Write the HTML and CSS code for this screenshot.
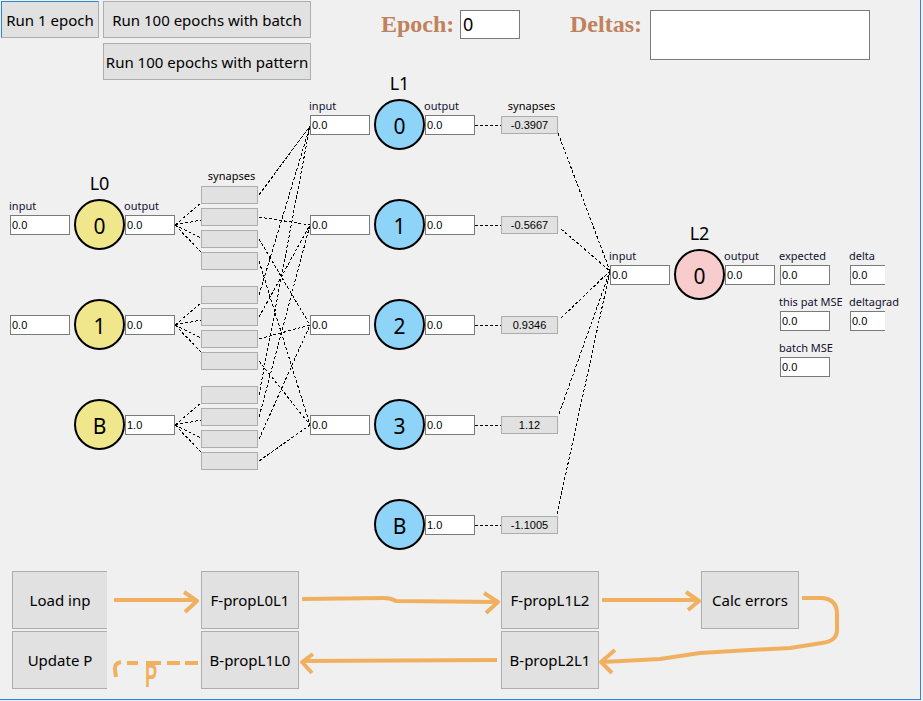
FILE: index.html
```html
<!DOCTYPE html>
<html>
<head>
<meta charset="utf-8">
<title>Neural network trainer</title>
<link rel="stylesheet" href="styles.css">
</head>
<body>
<div class="window">
  <div class="toolbar">
    <button class="btn run1">Run 1 epoch</button>
    <div class="btn-stack">
      <button class="btn wide">Run 100 epochs with batch</button>
      <button class="btn wide">Run 100 epochs with pattern</button>
    </div>
    <div class="stat epoch">
      <span class="stat-label">Epoch:</span>
      <div class="tb epoch-box">0</div>
    </div>
    <div class="stat deltas">
      <span class="stat-label">Deltas:</span>
      <div class="tb deltas-box"></div>
    </div>
  </div>

  <svg class="wires" width="921" height="700" viewBox="0 0 921 700">
    <g class="d">
      <path d="M175 225 L201 203 M175 225 L201 220 M175 225 L201 238 M175 225 L201 252"/>
      <path d="M175 325 L201 303 M175 325 L201 320 M175 325 L201 338 M175 325 L201 352"/>
      <path d="M175 425 L201 403 M175 425 L201 420 M175 425 L201 438 M175 425 L201 452"/>
      <path d="M259 195 L310 126 M259 217 L310 225 M259 239 L310 325 M259 261 L310 425"/>
      <path d="M259 295 L310 126 M259 317 L310 225 M259 339 L310 325 M259 361 L310 425"/>
      <path d="M259 395 L310 126 M259 417 L310 225 M259 439 L310 325 M259 461 L310 425"/>
      <path d="M475 125 H501 M475 225 H501 M475 325 H501 M475 425 H501 M475 525 H501"/>
      <path d="M558 133 L610 271 M561 229 L610 271 M561 318 L610 271 M559 414 L610 271 M557 514 L610 271"/>
    </g>
    <g class="o">
      <path d="M114 600 H196"/>
      <path d="M184 592 L197 601 L185 612"/>
      <path d="M302 599 L384 598 Q391 598 396 601 L497 602"/>
      <path d="M484 593 L498 602 L486 613"/>
      <path d="M602 600 L697 600"/>
      <path d="M686 592 L699 601 L688 610"/>
      <path d="M802 598 L822 598 Q837 599 837 614 L837 630 Q837 641 822 643 L790 648 L750 650 L700 653 L660 659 L602 662"/>
      <path d="M615 650 L601 662 L612 673"/>
      <path d="M497 660 L303 661"/>
      <path d="M313 654 L302 662 L312 673"/>
      <path d="M185 663 H198 M167 663 H180 M146 663 H161 M127 663 H138"/>
      <path d="M121 662 Q114 663 115 670 L116 677"/>
    </g>
  </svg>

  <div class="layer l0">
    <div class="neuron">
      <div class="field"><span class="cap">input</span>0.0</div>
      <div class="circle yellow"><span class="lname">L0</span>0</div>
      <div class="field out"><span class="cap">output</span>0.0</div>
    </div>
    <div class="neuron">
      <div class="field">0.0</div>
      <div class="circle yellow">1</div>
      <div class="field out">0.0</div>
    </div>
    <div class="neuron">
      <div class="field blank"></div>
      <div class="circle yellow">B</div>
      <div class="field out">1.0</div>
    </div>
  </div>

  <div class="syn syn0">
    <span class="syn-cap">synapses</span>
    <div class="group"><div class="sbox"></div><div class="sbox"></div><div class="sbox"></div><div class="sbox"></div></div>
    <div class="group"><div class="sbox"></div><div class="sbox"></div><div class="sbox"></div><div class="sbox"></div></div>
    <div class="group"><div class="sbox"></div><div class="sbox"></div><div class="sbox"></div><div class="sbox"></div></div>
  </div>

  <div class="layer l1">
    <div class="neuron">
      <div class="field"><span class="cap">input</span>0.0</div>
      <div class="circle blue"><span class="lname">L1</span>0</div>
      <div class="field out"><span class="cap">output</span>0.0</div>
    </div>
    <div class="neuron">
      <div class="field">0.0</div>
      <div class="circle blue">1</div>
      <div class="field out">0.0</div>
    </div>
    <div class="neuron">
      <div class="field">0.0</div>
      <div class="circle blue">2</div>
      <div class="field out">0.0</div>
    </div>
    <div class="neuron">
      <div class="field">0.0</div>
      <div class="circle blue">3</div>
      <div class="field out">0.0</div>
    </div>
    <div class="neuron">
      <div class="field blank"></div>
      <div class="circle blue">B</div>
      <div class="field out">1.0</div>
    </div>
  </div>

  <div class="syn syn1">
    <span class="syn-cap">synapses</span>
    <div class="sbox">-0.3907</div>
    <div class="sbox">-0.5667</div>
    <div class="sbox">0.9346</div>
    <div class="sbox">1.12</div>
    <div class="sbox">-1.1005</div>
  </div>

  <div class="layer l2">
    <div class="neuron">
      <div class="field"><span class="cap">input</span>0.0</div>
      <div class="circle pink"><span class="lname">L2</span>0</div>
      <div class="field out"><span class="cap">output</span>0.0</div>
    </div>
  </div>

  <div class="metrics">
    <div class="field"><span class="cap">expected</span>0.0</div>
    <div class="field clip"><span class="cap">delta</span>0.0</div>
    <div class="field"><span class="cap">this pat MSE</span>0.0</div>
    <div class="field clip"><span class="cap">deltagrad</span>0.0</div>
    <div class="field"><span class="cap">batch MSE</span>0.0</div>
  </div>

  <div class="flow">
    <div class="fbtn open c1 r1">Load inp</div>
    <div class="fbtn c3 r1">F-propL0L1</div>
    <div class="fbtn c5 r1">F-propL1L2</div>
    <div class="fbtn c7 r1">Calc errors</div>
    <div class="fbtn open c1 r2">Update P</div>
    <div class="fbtn c3 r2">B-propL1L0</div>
    <div class="fbtn c5 r2">B-propL2L1</div>
  </div>

  <span class="note-p">P</span>
</div>
</body>
</html>
```

FILE: styles.css
```css
* { box-sizing: border-box; }

html, body {
  margin: 0;
  padding: 0;
  background: #f0f0f0;
}

body {
  font-family: "Noto Sans", sans-serif;
  color: #000;
}

.window {
  position: relative;
  width: 921px;
  height: 700px;
  background: #f0f0f0;
  border-right: 1px solid #2a86d6;
  border-bottom: 1px solid #2a86d6;
  overflow: hidden;
}

/* ---------- toolbar ---------- */
.toolbar {
  display: flex;
  align-items: flex-start;
  padding: 1px 0 0 1px;
}

.btn {
  font: 15px "Noto Sans", sans-serif;
  color: #000;
  background: #e1e1e1;
  border: 1px solid #adadad;
  margin: 0;
  padding: 0;
  display: flex;
  align-items: center;
  justify-content: center;
  white-space: nowrap;
}

.run1 {
  width: 98px;
  height: 37px;
  border-top-color: #2a86d6;
  border-left-color: #2a86d6;
}

.btn-stack {
  display: flex;
  flex-direction: column;
  gap: 5px;
  margin-left: 4px;
}

.wide {
  width: 208px;
  height: 37px;
}

.stat {
  display: flex;
  align-items: flex-start;
  margin-top: 9px;
}

.epoch { margin-left: 70px; }
.deltas { margin-left: 50px; }

.stat-label {
  font: bold 24px "Liberation Serif", serif;
  color: #c0825c;
  line-height: 29px;
}

.epoch .stat-label { width: 79px; }
.deltas .stat-label { width: 80px; }

.tb {
  background: #fff;
  border: 1px solid #7a7a7a;
}

.epoch-box {
  width: 60px;
  height: 29px;
  font: 18px "Noto Sans", sans-serif;
  line-height: 27px;
  padding-left: 2px;
}

.deltas-box {
  width: 220px;
  height: 50px;
}

/* ---------- wires ---------- */
.wires {
  position: absolute;
  left: 0;
  top: 0;
  pointer-events: none;
}

.d path {
  fill: none;
  stroke: #000;
  stroke-width: 1;
  stroke-dasharray: 3 2;
  shape-rendering: crispEdges;
}

.o path {
  fill: none;
  stroke: #f0b060;
  stroke-width: 4;
  stroke-linejoin: round;
}

/* ---------- neurons ---------- */
.layer {
  position: absolute;
  display: flex;
  flex-direction: column;
  gap: 49px;
}

.l0 { left: 10px; top: 199px; }
.l1 { left: 310px; top: 99px; }
.l2 { left: 610px; top: 249px; }

.neuron {
  display: flex;
  align-items: center;
  height: 51px;
}

.field {
  position: relative;
  width: 60px;
  height: 20px;
  background: #fff;
  border: 1px solid #7a7a7a;
  font: 11px "Liberation Sans", sans-serif;
  line-height: 18px;
  padding-left: 1px;
  color: #000;
}

.field.out { width: 50px; }
.field.blank { visibility: hidden; }
.field.clip { border-right: none; }

.cap {
  position: absolute;
  left: -2px;
  bottom: calc(100% + 4px);
  font: 11px "Noto Sans", sans-serif;
  line-height: 13px;
  white-space: nowrap;
  color: #101030;
}

.circle {
  position: relative;
  width: 51px;
  height: 51px;
  margin-left: 4px;
  border: 2px solid #000;
  border-radius: 50%;
  display: flex;
  align-items: center;
  justify-content: center;
  padding-top: 3px;
  font: 21px "Noto Sans", sans-serif;
  color: #000;
}

.yellow { background: #f0e68c; }
.blue { background: #8dd4f8; }
.pink { background: #f8cccc; }

.lname {
  position: absolute;
  left: 0;
  right: 0;
  bottom: calc(100% + 8px);
  text-align: center;
  font: 18px "Noto Sans", sans-serif;
  line-height: 20px;
}

/* ---------- synapses ---------- */
.syn {
  position: absolute;
  display: flex;
  flex-direction: column;
  width: 57px;
}

.syn0 { left: 201px; top: 186px; gap: 16px; }
.syn1 { left: 501px; top: 116px; gap: 82px; }

.group {
  display: flex;
  flex-direction: column;
  gap: 4px;
}

.sbox {
  width: 57px;
  height: 18px;
  background: #e1e1e1;
  border: 1px solid #adadad;
  font: 11px "Liberation Sans", sans-serif;
  line-height: 16px;
  text-align: center;
}

.syn-cap {
  position: absolute;
  left: 0;
  right: -4px;
  bottom: calc(100% + 4px);
  text-align: center;
  font: 11px "Noto Sans", sans-serif;
  line-height: 13px;
}

/* ---------- metrics ---------- */
.metrics {
  position: absolute;
  left: 780px;
  top: 265px;
  display: grid;
  grid-template-columns: 50px 35px;
  column-gap: 20px;
  row-gap: 26px;
}

.metrics .field { width: auto; }

/* ---------- flow ---------- */
.flow {
  display: grid;
  grid-template-columns: 95px 94px 98px 202px 98px 102px 98px;
  grid-template-rows: 58px 58px;
  row-gap: 2px;
  margin: 491px 0 0 12px;
}

.fbtn {
  background: #e1e1e1;
  border: 1px solid #adadad;
  font: 15px "Noto Sans", sans-serif;
  display: flex;
  align-items: center;
  justify-content: center;
  white-space: nowrap;
}

.fbtn.open { border-right: none; }

.c1 { grid-column: 1; }
.c3 { grid-column: 3; }
.c5 { grid-column: 5; }
.c7 { grid-column: 7; }
.r1 { grid-row: 1; }
.r2 { grid-row: 2; }

.note-p {
  position: absolute;
  left: 145px;
  top: 659px;
  font: bold 33px "Liberation Sans", sans-serif;
  line-height: 1;
  color: #f0b060;
  transform: scaleX(0.55);
  transform-origin: left top;
}
```
